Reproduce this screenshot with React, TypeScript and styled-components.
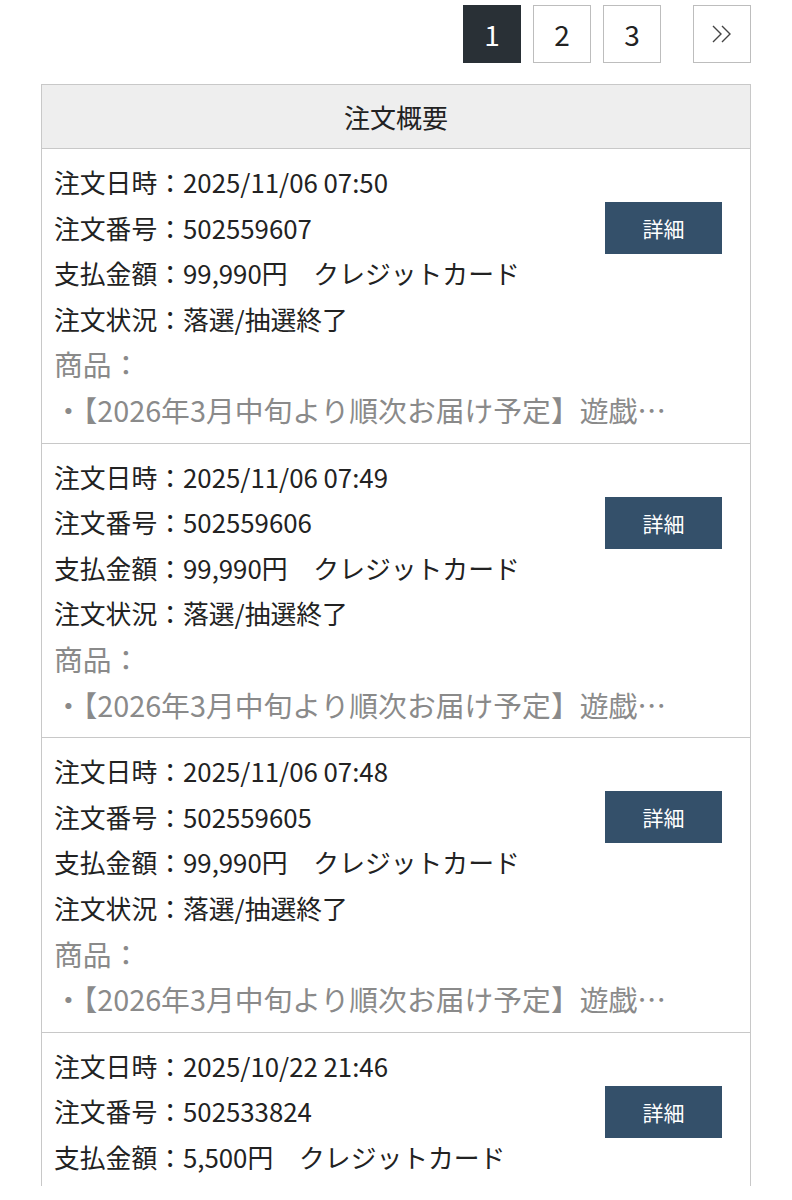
import React from "react";
import styled, { createGlobalStyle } from "styled-components";

const Global = createGlobalStyle`
  html, body { margin: 0; padding: 0; background: #fff; }
  body { font-family: "Noto Sans CJK JP", "Noto Sans", sans-serif; color: #222; }
`;

const Page = styled.div`
  width: 792px;
  padding: 5px 41px 0 41px;
  box-sizing: border-box;
`;

const Pager = styled.nav`
  display: flex;
  justify-content: flex-end;
  gap: 12px;
  margin-bottom: 21px;
`;

const PageBtn = styled.a<{ $active?: boolean; $gapBefore?: boolean }>`
  width: 58px;
  height: 58px;
  box-sizing: border-box;
  display: flex;
  align-items: center;
  justify-content: center;
  font-size: 28px;
  color: ${(p) => (p.$active ? "#fff" : "#222")};
  background: ${(p) => (p.$active ? "#293036" : "#fff")};
  border: 1px solid ${(p) => (p.$active ? "#293036" : "#bdbdbd")};
  margin-left: ${(p) => (p.$gapBefore ? "20px" : "0")};
`;

const Table = styled.div`
  border: 1px solid #c8c8c8;
  border-bottom: none;
`;

const Head = styled.div`
  height: 63px;
  background: #eeeeee;
  border-bottom: 1px solid #c8c8c8;
  display: flex;
  align-items: center;
  justify-content: center;
  font-size: 26px;
`;

const Row = styled.div<{ $last?: boolean }>`
  display: grid;
  grid-template-columns: 1fr 117px;
  column-gap: 28px;
  padding: 10px 28px ${(p) => (p.$last ? "7px" : "10px")} 12px;
  border-bottom: ${(p) => (p.$last ? "none" : "1px solid #c8c8c8")};
`;

const Lines = styled.div`
  line-height: 45.6px;
  white-space: nowrap;
  min-width: 0;
`;

const Line = styled.div<{ $muted?: boolean }>`
  font-size: ${(p) => (p.$muted ? "28.8px" : "25.8px")};
  color: ${(p) => (p.$muted ? "#8a8a8a" : "#222")};
`;

const Detail = styled.button`
  margin-top: 43px;
  width: 117px;
  height: 52px;
  background: #34506a;
  color: #fff;
  border: none;
  font-family: inherit;
  font-size: 21px;
  align-self: start;
`;

const Chevrons = () => (
  <svg width="24" height="20" viewBox="0 0 24 20" fill="none" stroke="#444" strokeWidth="1.4">
    <polyline points="3,2 11,10 3,18" />
    <polyline points="12,2 20,10 12,18" />
  </svg>
);

type Order = {
  date: string;
  no: string;
  pay: string;
  status?: string;
  product?: string;
};

const orders: Order[] = [
  { date: "2025/11/06 07:50", no: "502559607", pay: "99,990円　クレジットカード", status: "落選/抽選終了", product: "・【2026年3月中旬より順次お届け予定】遊戯…" },
  { date: "2025/11/06 07:49", no: "502559606", pay: "99,990円　クレジットカード", status: "落選/抽選終了", product: "・【2026年3月中旬より順次お届け予定】遊戯…" },
  { date: "2025/11/06 07:48", no: "502559605", pay: "99,990円　クレジットカード", status: "落選/抽選終了", product: "・【2026年3月中旬より順次お届け予定】遊戯…" },
  { date: "2025/10/22 21:46", no: "502533824", pay: "5,500円　クレジットカード" },
];

export default function App() {
  return (
    <Page>
      <Global />
      <Pager>
        <PageBtn $active>1</PageBtn>
        <PageBtn>2</PageBtn>
        <PageBtn>3</PageBtn>
        <PageBtn $gapBefore>
          <Chevrons />
        </PageBtn>
      </Pager>
      <Table>
        <Head>注文概要</Head>
        {orders.map((o, i) => (
          <Row key={o.no} $last={i === orders.length - 1}>
            <Lines>
              <Line>注文日時：{o.date}</Line>
              <Line>注文番号：{o.no}</Line>
              <Line>支払金額：{o.pay}</Line>
              {o.status && <Line>注文状況：{o.status}</Line>}
              {o.product && (
                <>
                  <Line $muted>商品：</Line>
                  <Line $muted>{o.product}</Line>
                </>
              )}
            </Lines>
            <Detail>詳細</Detail>
          </Row>
        ))}
      </Table>
    </Page>
  );
}
